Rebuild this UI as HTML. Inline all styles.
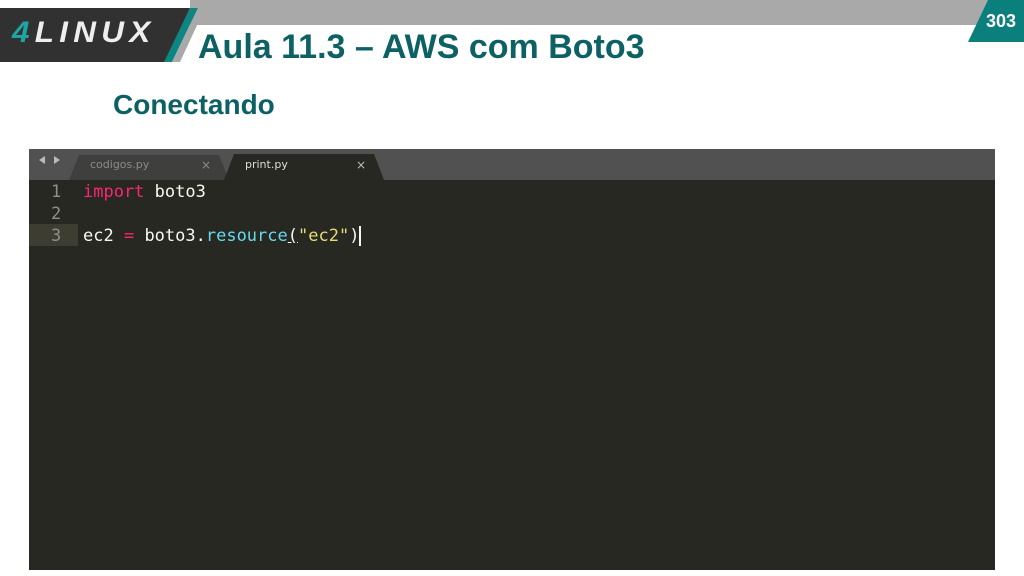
<!DOCTYPE html>
<html><head><meta charset="utf-8"><style>
body{margin:0;width:1024px;height:576px;background:#fff;position:relative;overflow:hidden;font-family:"Liberation Sans",sans-serif}
.abs{position:absolute}
</style></head><body>
<svg class="abs" style="left:0;top:0" width="1024" height="70">
<polygon points="190,0 1024,0 1024,25 190,25" fill="#a9a9a9"/>
<polygon points="0,8 190,8 165,62 0,62" fill="#313131"/>
<polygon points="190,8 198,8 172,62 164,62" fill="#0d8583"/>
<polygon points="198,8 205,8 180,62 172,62" fill="#a9a9a9"/>
<polygon points="988,0 1024,0 1024,42 968,42" fill="#0a7f7c"/>
</svg>
<div class="abs" style="left:12px;top:16px;font:italic 900 30px 'Liberation Sans',sans-serif;letter-spacing:5px;transform:scaleX(1.05);transform-origin:left"><span style="color:#1fa3a3">4</span><span style="color:#eee">LINUX</span></div>
<div class="abs" style="left:986px;top:11px;color:#fff;font-weight:bold;font-size:18px">303</div>
<div class="abs" style="left:198px;top:28px;color:#0d6164;font-weight:bold;font-size:34px">Aula 11.3 – AWS com Boto3</div>
<div class="abs" style="left:113px;top:89px;color:#0d6164;font-weight:bold;font-size:28px">Conectando</div>
<div class="abs" style="left:29px;top:149px;width:966px;height:421px;background:#272822"></div>
<div class="abs" style="left:29px;top:149px;width:966px;height:31px;background:#515151"></div>
<svg class="abs" style="left:29px;top:149px" width="400" height="31">
<polygon points="40,31 50,6 190,6 200,31" fill="#3f3f3d"/>
<polygon points="195,31 205,5 345,5 355,31" fill="#272822"/>
<polygon points="10,11 16,7 16,15" fill="#bbb"/><polygon points="25,7 31,11 25,15" fill="#bbb"/>
</svg>
<div class="abs" style="left:90px;top:158px;color:#8c8c8a;font:11px 'DejaVu Sans',sans-serif">codigos.py</div>
<div class="abs" style="left:201px;top:158px;color:#8c8c8a;font:12px 'DejaVu Sans',sans-serif">×</div>
<div class="abs" style="left:245px;top:158px;color:#ddd;font:11px 'DejaVu Sans',sans-serif">print.py</div>
<div class="abs" style="left:356px;top:158px;color:#bbb;font:12px 'DejaVu Sans',sans-serif">×</div>
<div class="abs" style="left:29px;top:224px;width:49px;height:22px;background:#3e3d32"></div>
<div class="abs" style="left:51px;top:181px;color:#8f908a;font:17px/22px 'DejaVu Sans Mono',monospace">1<br>2<br>3</div>
<div class="abs" style="left:83px;top:181px;color:#f8f8f2;font:17px/22px 'DejaVu Sans Mono',monospace;white-space:pre"><span style="color:#f92672">import</span> boto3

ec2 <span style="color:#f92672">=</span> boto3.<span style="color:#66d9ef">resource</span><span style="text-decoration:underline">(</span><span style="color:#e6db74">"ec2"</span>)<span style="border-left:2px solid #f8f8f0"></span></div>
</body></html>
